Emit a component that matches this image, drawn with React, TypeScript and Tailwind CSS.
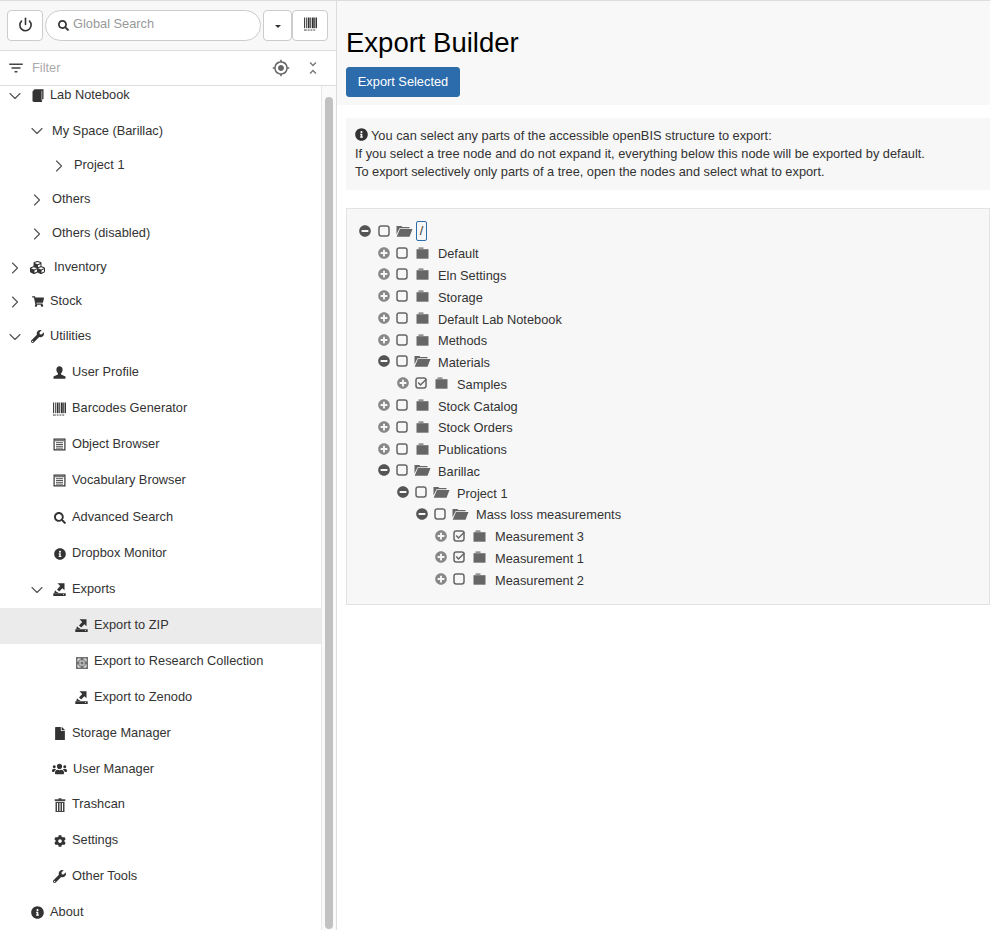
import { ReactNode } from "react";
import { ChevronDown, ChevronRight, Power } from "lucide-react";
import {
  FaCog,
  FaCubes,
  FaFile,
  FaInfoCircle,
  FaMinusCircle,
  FaPlusCircle,
  FaSearch,
  FaShoppingCart,
  FaUsers,
  FaWrench,
} from "react-icons/fa";
import { MdFilterList, MdGpsFixed, MdUnfoldLess } from "react-icons/md";

function Barcode({ className }: { className?: string }) {
  return (
    <svg viewBox="0 0 14 14" className={className} fill="currentColor">
      <rect x="0" y="0" width="1" height="11.5" />
      <rect x="2" y="0" width="1" height="11.5" />
      <rect x="4" y="0" width="2" height="11.5" />
      <rect x="6.7" y="0" width="1" height="11.5" />
      <rect x="8.5" y="0" width="2" height="11.5" />
      <rect x="11" y="0" width="1" height="11.5" />
      <rect x="12.5" y="0" width="1.5" height="11.5" />
      <rect x="0" y="13" width="3" height="1" />
      <rect x="4" y="13" width="2" height="1" />
      <rect x="7" y="13" width="2" height="1" />
      <rect x="10" y="13" width="2" height="1" />
    </svg>
  );
}

function ExportIcon() {
  return (
    <svg viewBox="0 0 13 13" className="h-[13px] w-[13px]" fill="#333">
      <path d="M4.5 0.3h7V7.3L9.4 5.3 6.2 8.5 4 6.4 7.2 3.1z" />
      <path d="M2 7.2l2 2h1.5l-.9 1H1.2z" />
      <path fillRule="evenodd" d="M0.3 10.2h12.4v2.8H0.3zM10 11.2v.8h1v-.8z" />
    </svg>
  );
}

function ListBox() {
  return (
    <svg viewBox="0 0 13 13" className="h-[13px] w-[13px]" fill="#333">
      <path fillRule="evenodd" d="M0.5 0.5h12v12h-12zM1.7 1.7v9.6h9.6V1.7z" />
      <rect x="1.7" y="1.7" width="9.6" height="1.6" fill="#777" />
      <rect x="3" y="4.2" width="7" height="1" fill="#555" />
      <rect x="3" y="6" width="7" height="1" fill="#555" />
      <rect x="3" y="7.8" width="7" height="1" fill="#555" />
      <rect x="3" y="9.6" width="7" height="1" fill="#555" />
    </svg>
  );
}

function ResearchIcon() {
  return (
    <svg viewBox="0 0 12 12" className="mt-[3px] h-[12px] w-[12px]">
      <rect width="12" height="12" fill="#707070" />
      <path
        d="M2 4.5V2h2.5M7.5 2H10v2.5M10 7.5V10H7.5M4.5 10H2V7.5"
        fill="none"
        stroke="#fff"
        strokeWidth="1"
      />
      <rect x="4" y="4" width="4" height="4" fill="none" stroke="#ddd" strokeWidth="1" />
    </svg>
  );
}

function BookIcon() {
  return (
    <svg viewBox="0 0 12 13" className="h-[13px] w-[12px]">
      <path d="M0.5 2.5 2.5 0.3h9V10L10 10.5V13H2l-1.5-.8z" fill="#333" />
      <rect x="9.3" y="1.8" width="1" height="9.6" fill="#aaa" />
    </svg>
  );
}

function UserIcon() {
  return (
    <svg viewBox="0 0 13 13" className="h-[13px] w-[13px]" fill="#333">
      <path d="M6.5 0.2c2 0 3.1 1.4 3.1 3.4 0 1.6-.7 3-1.5 3.7v1.2l4.4 2v2.3H.5v-2.3l4.4-2V7.3C4.1 6.6 3.4 5.2 3.4 3.6c0-2 1.1-3.4 3.1-3.4z" />
    </svg>
  );
}

function TrashIcon() {
  return (
    <svg viewBox="0 0 12 14" className="h-[14px] w-[12px]" fill="#444">
      <path d="M4.5 0.3h3v1h3.8v1.8H.7V1.3h3.8z" />
      <path
        fillRule="evenodd"
        d="M1.5 3.8h9V14h-9zM3 5v8h1V5zM5.5 5v8h1V5zM8 5v8h1V5z"
      />
    </svg>
  );
}

function FolderIcon() {
  return (
    <svg viewBox="0 0 13 12" className="h-[12px] w-[13px]" fill="#666">
      <path d="M2.5 0.5h5v1.2h-5z" />
      <path d="M0.5 2.2h12V11.7H0.5z" />
    </svg>
  );
}

function FolderOpenIcon() {
  return (
    <svg viewBox="0 0 17 12" className="h-[12px] w-[17px]" fill="#666">
      <path d="M0.5 1h5l.7 1h7.3v1.2H3.5L.5 9.5z" />
      <path d="M3.9 4h12.6l-3 7.7H.7z" />
    </svg>
  );
}

function Check({ checked }: { checked?: boolean }) {
  return (
    <svg viewBox="0 0 12 12" className="h-[12px] w-[12px] shrink-0" fill="none">
      <rect x="1" y="1" width="10" height="10" rx="2.2" stroke="#666" strokeWidth="1.5" />
      {checked && <path d="M3.2 5.5 5.5 8 11.5 2" stroke="#666" strokeWidth="1.5" />}
    </svg>
  );
}

type Row = {
  label: string;
  level: number;
  h: number;
  open?: boolean;
  closed?: boolean;
  icon?: ReactNode;
  textClass?: string;
  active?: boolean;
};

const i13 = "h-[13px] w-[13px]";

const rows: Row[] = [
  { label: "Lab Notebook", level: 0, h: 36, open: true, icon: <BookIcon /> },
  { label: "My Space (Barillac)", level: 1, h: 35, open: true },
  { label: "Project 1", level: 2, h: 34, closed: true },
  { label: "Others", level: 1, h: 34, closed: true },
  { label: "Others (disabled)", level: 1, h: 34, closed: true },
  { label: "Inventory", level: 0, h: 34, closed: true, icon: <FaCubes className="h-[15px] w-[17px] shrink-0" />, textClass: "ml-[10px]" },
  { label: "Stock", level: 0, h: 34, closed: true, icon: <FaShoppingCart className="h-[11px] w-[12px]" />, textClass: "ml-[6px]" },
  { label: "Utilities", level: 0, h: 36, open: true, icon: <FaWrench className={i13} /> },
  { label: "User Profile", level: 1, h: 36, icon: <UserIcon /> },
  { label: "Barcodes Generator", level: 1, h: 36, icon: <Barcode className="h-[14px] w-[13px]" /> },
  { label: "Object Browser", level: 1, h: 35, icon: <ListBox /> },
  { label: "Vocabulary Browser", level: 1, h: 38, icon: <ListBox /> },
  { label: "Advanced Search", level: 1, h: 36, icon: <FaSearch className="h-[12px] w-[12px]" /> },
  { label: "Dropbox Monitor", level: 1, h: 36, icon: <FaInfoCircle className="h-[12px] w-[12px]" /> },
  { label: "Exports", level: 1, h: 36, open: true, icon: <ExportIcon /> },
  { label: "Export to ZIP", level: 2, h: 36, icon: <ExportIcon />, active: true },
  { label: "Export to Research Collection", level: 2, h: 36, icon: <ResearchIcon /> },
  { label: "Export to Zenodo", level: 2, h: 36, icon: <ExportIcon /> },
  { label: "Storage Manager", level: 1, h: 36, icon: <FaFile className="h-[13px] w-[10px]" /> },
  { label: "User Manager", level: 1, h: 35, icon: <FaUsers className="h-[14px] w-[15px] shrink-0" />, textClass: "ml-[7px]" },
  { label: "Trashcan", level: 1, h: 36, icon: <TrashIcon /> },
  { label: "Settings", level: 1, h: 36, icon: <FaCog className="h-[12px] w-[12px]" /> },
  { label: "Other Tools", level: 1, h: 36, icon: <FaWrench className={i13} /> },
  { label: "About", level: 0, h: 36, icon: <FaInfoCircle className={i13} /> },
];

function NavRow({ row }: { row: Row }) {
  return (
    <div
      className={`flex shrink-0 items-center pb-[1px] text-[12.8px] leading-none text-[#333] ${
        row.active ? "bg-[#ebebeb]" : ""
      }`}
      style={{ height: row.h, paddingLeft: 8 + row.level * 22 }}
    >
      <span className="flex w-[14px] shrink-0 justify-center text-[#555]">
        {row.open && <ChevronDown size={20} strokeWidth={1.4} className="shrink-0" />}
        {row.closed && <ChevronRight size={20} strokeWidth={1.4} className="shrink-0" />}
      </span>
      {row.icon ? (
        <>
          <span className="ml-[9px] flex w-[13px] shrink-0 items-center justify-center text-[#333]">
            {row.icon}
          </span>
          <span className={row.textClass ?? "ml-[6px]"}>{row.label}</span>
        </>
      ) : (
        <span className="ml-2">{row.label}</span>
      )}
    </div>
  );
}

function Sidebar() {
  return (
    <aside className="flex h-full w-[337px] shrink-0 flex-col border-r border-[#ddd]">
      <div className="flex h-[49px] shrink-0 items-center bg-[#f8f8f8] pl-[7px]">
        <button className="flex h-[31px] w-[36px] items-center justify-center rounded-[4px] border border-[#ccc] bg-white pb-[3px] text-[#333]">
          <Power size={15} strokeWidth={2.5} />
        </button>
        <div className="ml-[2px] flex h-[31px] w-[216px] items-center rounded-full border border-[#ccc] bg-white pl-[12px] text-[12.8px] text-[#999]">
          <FaSearch className="h-[11px] w-[11px] text-[#333]" />
          <span className="ml-[4px] pb-[3px]">Global Search</span>
        </div>
        <button className="ml-[2px] flex h-[31px] w-[29px] items-center justify-center rounded-[4px] border border-[#ccc] bg-white">
          <span className="mt-[1px] h-0 w-0 border-x-[3px] border-t-[3px] border-x-transparent border-t-[#333]" />
        </button>
        <button className="flex h-[31px] w-[36px] items-center justify-center rounded-[4px] border border-[#ccc] bg-white pb-[3px] text-[#333]">
          <Barcode className="h-[14px] w-[13px]" />
        </button>
      </div>
      <div className="flex h-[36px] shrink-0 items-center border-y border-[#ddd] bg-white text-[12.8px] text-[#aaa]">
        <MdFilterList className="ml-[7px] h-[18px] w-[18px] text-[#444]" />
        <span className="ml-[7px]">Filter</span>
        <MdGpsFixed className="ml-auto h-[18px] w-[18px] text-[#666]" />
        <MdUnfoldLess className="mr-[14px] ml-[14px] h-[18px] w-[18px] text-[#777]" />
      </div>
      <div className="flex min-h-0 flex-1">
        <nav className="min-w-0 flex-1 overflow-hidden">
          <div className="-mt-[8px]">
            {rows.map((r) => (
              <NavRow key={r.label} row={r} />
            ))}
          </div>
        </nav>
        <div className="w-[15px] shrink-0 border-l border-[#e8e8e8] bg-[#fafafa] pt-[11px] pl-[3px]">
          <div className="h-[832px] w-[8px] rounded-full bg-[#c1c1c1]" />
        </div>
      </div>
    </aside>
  );
}

type Node = { label: string; level: number; open?: boolean; checked?: boolean };

const nodes: Node[] = [
  { label: "Default", level: 1 },
  { label: "Eln Settings", level: 1 },
  { label: "Storage", level: 1 },
  { label: "Default Lab Notebook", level: 1 },
  { label: "Methods", level: 1 },
  { label: "Materials", level: 1, open: true },
  { label: "Samples", level: 2, checked: true },
  { label: "Stock Catalog", level: 1 },
  { label: "Stock Orders", level: 1 },
  { label: "Publications", level: 1 },
  { label: "Barillac", level: 1, open: true },
  { label: "Project 1", level: 2, open: true },
  { label: "Mass loss measurements", level: 3, open: true },
  { label: "Measurement 3", level: 4, checked: true },
  { label: "Measurement 1", level: 4, checked: true },
  { label: "Measurement 2", level: 4 },
];

function TreeRow({ node }: { node: Node }) {
  return (
    <div
      className="flex h-[21.78px] items-center text-[12.8px] leading-none text-[#333]"
      style={{ paddingLeft: node.level * 19 }}
    >
      {node.open ? (
        <FaMinusCircle className="h-[12px] w-[12px] shrink-0 text-[#555]" />
      ) : (
        <FaPlusCircle className="h-[12px] w-[12px] shrink-0 text-[#888]" />
      )}
      <span className="ml-[6px]">
        <Check checked={node.checked} />
      </span>
      <span className="ml-[6px] flex w-[17px] shrink-0 justify-center">
        {node.open ? <FolderOpenIcon /> : <FolderIcon />}
      </span>
      <span className="mt-[4px] ml-[7px]">{node.label}</span>
    </div>
  );
}

function Main() {
  return (
    <main className="min-w-0 flex-1 bg-white">
      <div className="h-[104px] bg-[#f8f8f8] px-[9px] pt-[27px]">
        <h1 className="text-[27.5px] leading-[30px] font-normal text-black">Export Builder</h1>
        <button className="mt-[9px] h-[30px] w-[114px] rounded-[3px] border border-[#2e6da4] bg-[#2c6cac] text-[12.8px] text-white">
          Export Selected
        </button>
      </div>
      <div className="mt-[13px] ml-[9px] h-[72px] bg-[#f7f7f7] px-[9px] pt-[9px] text-[12.8px] leading-[18px] text-[#333]">
        <p>
          <FaInfoCircle className="mr-[3px] inline h-[13px] w-[13px] align-[-1px]" />
          You can select any parts of the accessible openBIS structure to export:
        </p>
        <p>If you select a tree node and do not expand it, everything below this node will be exported by default.</p>
        <p>To export selectively only parts of a tree, open the nodes and select what to export.</p>
      </div>
      <div className="mt-[18px] ml-[9px] h-[397px] border border-[#e3e3e3] bg-[#f7f7f7] pt-[11px] pl-[12px]">
        <div className="flex h-[21.78px] items-center pt-[1px] text-[12.8px] leading-none text-[#333]">
          <FaMinusCircle className="h-[12px] w-[12px] shrink-0 text-[#555]" />
          <span className="ml-[7px]">
            <Check />
          </span>
          <span className="ml-[6px] flex w-[17px] shrink-0 justify-center">
            <FolderOpenIcon />
          </span>
          <span className="ml-[3px] flex h-[20px] w-[11px] items-center justify-center rounded-[2px] border border-[#2c6cac]">/</span>
        </div>
        {nodes.map((n) => (
          <TreeRow key={n.label} node={n} />
        ))}
      </div>
    </main>
  );
}

export default function App() {
  return (
    <div className="flex h-[930px] w-[990px] overflow-hidden border-t border-[#ddd] font-['Liberation_Sans',Arial,sans-serif]">
      <Sidebar />
      <Main />
    </div>
  );
}
